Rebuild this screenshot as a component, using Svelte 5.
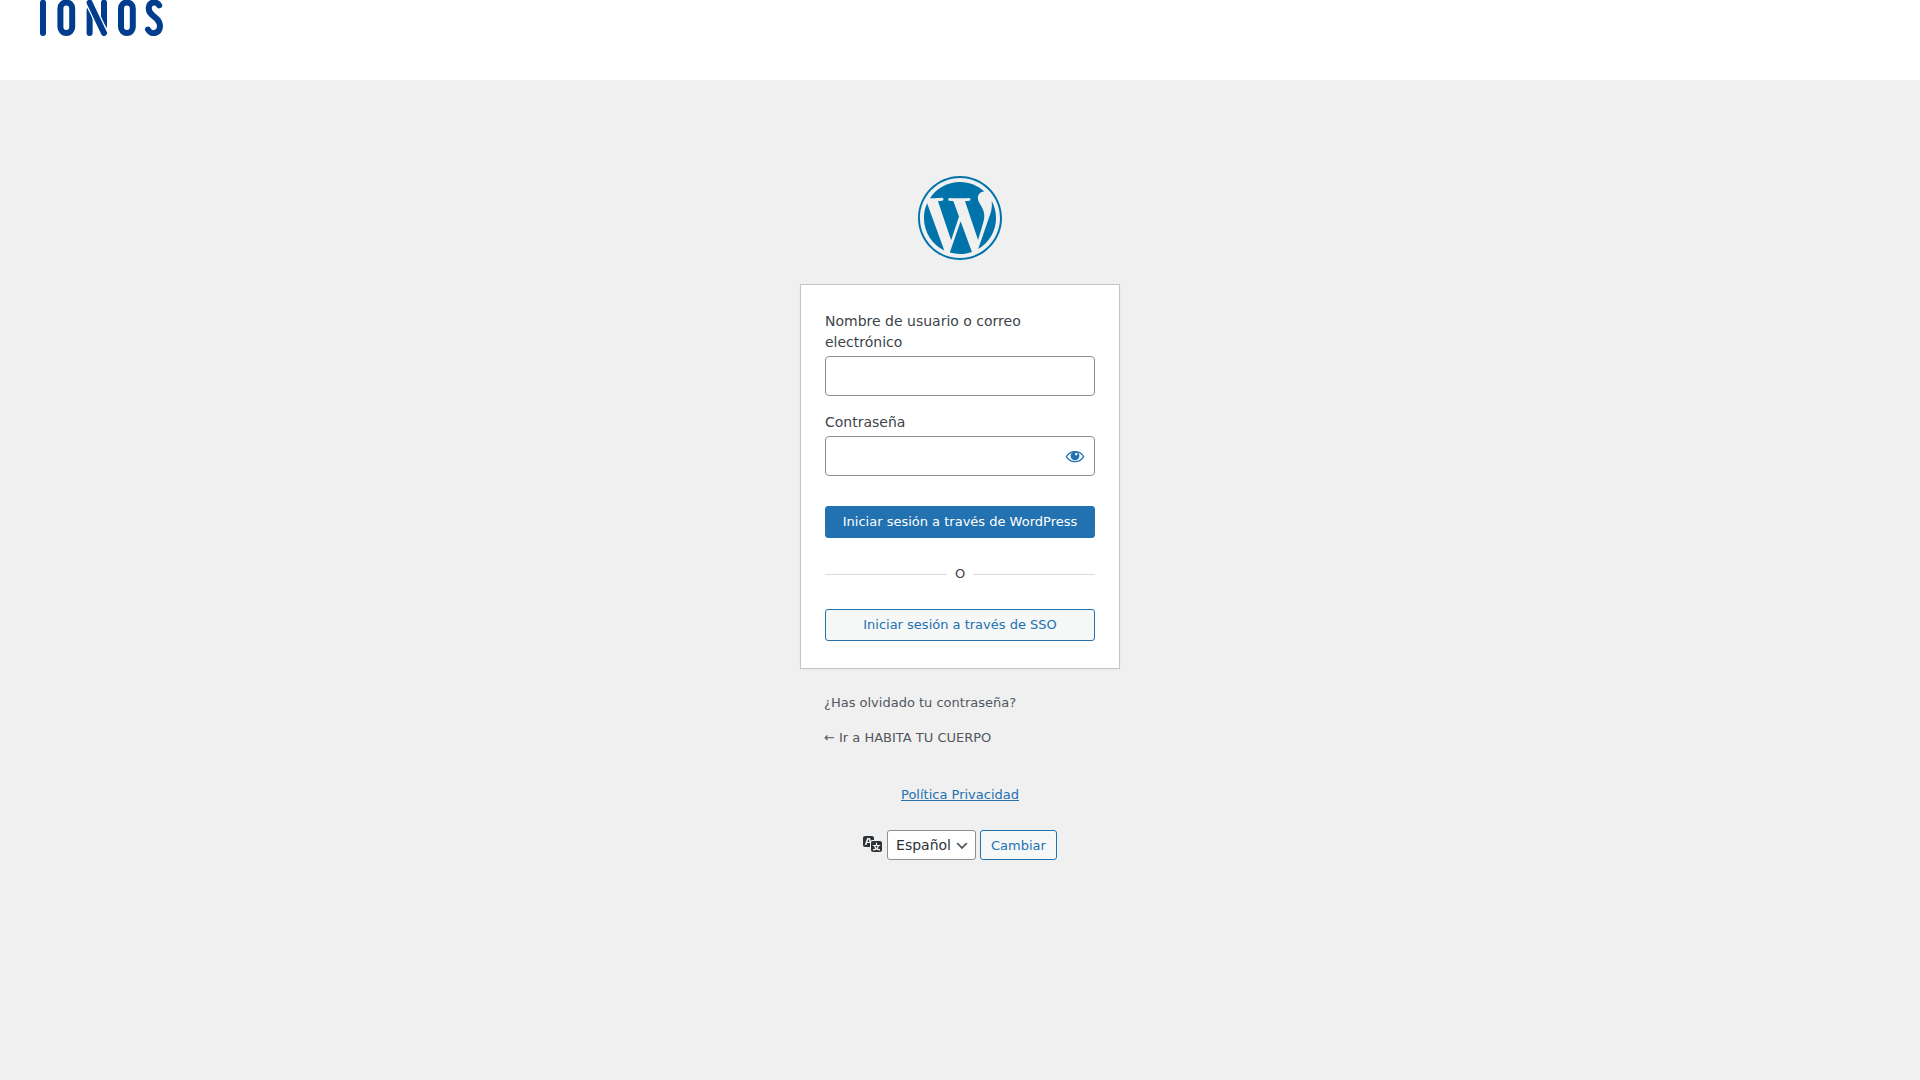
<script>
  let user = $state('');
  let password = $state('');
  let visible = $state(false);
</script>

<header>
  <svg class="brand" viewBox="0 0 124 36" role="img" aria-label="IONOS">
    <g fill="none" stroke="#003d8f" stroke-width="6" stroke-linecap="round">
      <path d="M3 2.7V33" />
      <path d="M20.4 8.4a5.9 5.9 0 0 1 11.8 0V27.1a5.9 5.9 0 0 1-11.8 0Z" />
      <path d="M49.6 10V33M64 2.7V26" />
      <path d="M49.6 2.5L64 33" stroke="#fff" stroke-width="8.6" stroke-linecap="butt" />
      <path d="M49.6 14V33M64 2.7V22" stroke-width="5" />
      <path d="M49.6 2.5L64 33" stroke="#fff" stroke-width="8.6" stroke-linecap="butt" />
      <path d="M49.6 2.7L64 33" />
      <path d="M81 8.4a5.9 5.9 0 0 1 11.8 0V27.1a5.9 5.9 0 0 1-11.8 0Z" />
      <path d="M119.2 5.4C117.3 1.7 110 .8 108.8 7.2C107.6 16.5 120.4 16.5 120 26.3C119.5 34.2 110.7 35.2 108 29.5" />
    </g>
  </svg>
</header>

<main>
  <h1>
    <a href="#wordpress" aria-label="WordPress">
      <svg class="logo" viewBox="0 0 64 64" aria-hidden="true"><path fill="#0073aa" d="M4.548 31.999c0 10.9 6.3 20.3 15.5 24.706L6.925 20.827C5.402 24.2 4.5 28 4.5 31.999z M50.531 30.614c0-3.394-1.219-5.742-2.264-7.57c-1.391-2.263-2.695-4.177-2.695-6.439c0-2.523 1.912-4.872 4.609-4.872 c0.121 0 0.2 0 0.4 0.022C45.653 7.3 39.1 4.5 32 4.548c-9.591 0-18.027 4.921-22.936 12.4 c0.645 0 1.3 0 1.8 0.033c2.871 0 7.316-0.349 7.316-0.349c1.479-0.086 1.7 2.1 0.2 2.3 c0 0-1.487 0.174-3.142 0.261l9.997 29.735l6.008-18.017l-4.276-11.718c-1.479-0.087-2.879-0.261-2.879-0.261 c-1.48-0.087-1.306-2.349 0.174-2.262c0 0 4.5 0.3 7.2 0.349c2.87 0 7.317-0.349 7.317-0.349 c1.479-0.086 1.7 2.1 0.2 2.262c0 0-1.489 0.174-3.142 0.261l9.92 29.508l2.739-9.148 C49.628 35.7 50.5 33 50.5 30.614z M32.481 34.4l-8.237 23.934c2.46 0.7 5.1 1.1 7.8 1.1 c3.197 0 6.262-0.552 9.116-1.556c-0.072-0.118-0.141-0.243-0.196-0.379L32.481 34.4z M56.088 18.8 c0.119 0.9 0.2 1.8 0.2 2.823c0 2.785-0.521 5.916-2.088 9.832l-8.385 24.242c8.161-4.758 13.65-13.6 13.65-23.728 C59.451 27.2 58.2 22.7 56.1 18.83z M32 0c-17.645 0-32 14.355-32 32C0 49.6 14.4 64 32 64s32-14.355 32-32.001 C64 14.4 49.6 0 32 0z M32 62.533c-16.835 0-30.533-13.698-30.533-30.534C1.467 15.2 15.2 1.5 32 1.5 s30.534 13.7 30.5 30.532C62.533 48.8 48.8 62.5 32 62.533z" /></svg>
    </a>
  </h1>

  <form class="card" onsubmit={(e) => e.preventDefault()}>
    <div class="field">
      <label for="user">Nombre de usuario o correo electrónico</label>
      <input id="user" type="text" bind:value={user} autocomplete="username" />
    </div>
    <div class="field">
      <label for="pass">Contraseña</label>
      <div class="secret">
        <input id="pass" type={visible ? 'text' : 'password'} bind:value={password} autocomplete="current-password" />
        <button type="button" class="eye" aria-label="Mostrar la contraseña" onclick={() => (visible = !visible)}>
          <svg viewBox="0 0 20 20" aria-hidden="true">
            <path fill="none" stroke="currentColor" stroke-width="1.2" d="M1.4 10.6C3.3 7.2 6.5 5.6 10 5.6s6.7 1.6 8.6 5c-1.9 3.4-5.1 5-8.6 5s-6.7-1.6-8.6-5z" />
            <path fill="currentColor" fill-rule="evenodd" d="M10 5.4a4.4 4.4 0 1 1 0 8.8A4.4 4.4 0 0 1 10 5.4zM10.2 7v2.2h2V7z" />
          </svg>
        </button>
      </div>
    </div>
    <button type="submit" class="button primary wide">Iniciar sesión a través de WordPress</button>
    <div class="divider"><span>O</span></div>
    <button type="button" class="button wide">Iniciar sesión a través de SSO</button>
  </form>

  <nav>
    <a href="#recuperar">¿Has olvidado tu contraseña?</a>
    <a href="#inicio">← Ir a HABITA TU CUERPO</a>
  </nav>

  <a class="privacy" href="#privacidad">Política Privacidad</a>

  <form class="language" onsubmit={(e) => e.preventDefault()}>
    <label for="locale" aria-label="Idioma">
      <svg viewBox="0 0 20 20" aria-hidden="true"><path fill="currentColor" d="M11 7H9.49c-.63 0-1.25.3-1.59.7L7 5H4.13l-2.39 7h1.69l.74-2H7v4H2c-1.1 0-2-.9-2-2V5c0-1.1.9-2 2-2h7c1.1 0 2 .9 2 2v2zM6.51 9H4.49l1-2.93zM10 8h7c1.1 0 2 .9 2 2v7c0 1.1-.9 2-2 2h-7c-1.1 0-2-.9-2-2v-7c0-1.1.9-2 2-2zm7.25 5v-1.08h-3.17V9.75h-1.16v2.17H9.75V13h1.28c.11.85.56 1.85 1.28 2.62-.87.36-1.89.62-2.31.62-.01.02.22.97.2 1.46.84 0 2.21-.5 3.28-1.15 1.09.65 2.48 1.15 3.34 1.15-.02-.49.2-1.44.2-1.46-.43 0-1.49-.27-2.38-.63.7-.77 1.14-1.77 1.25-2.61h1.36zm-3.81 1.93c-.5-.46-.85-1.13-1.01-1.93h2.09c-.17.8-.51 1.47-1 1.93l-.04.03s-.03-.02-.04-.03z" /></svg>
    </label>
    <select id="locale">
      <option>Español</option>
    </select>
    <button type="submit" class="button">Cambiar</button>
  </form>
</main>

<style>
  :global(body) {
    margin: 0;
    background: #f0f0f0;
    color: #3c434a;
    font: 13px/18px "DejaVu Sans", sans-serif;
  }

  * {
    box-sizing: border-box;
  }

  input,
  button,
  select {
    font-family: inherit;
  }

  svg {
    display: block;
  }

  header {
    height: 80px;
    padding: 0 40px;
    background: #fff;
  }

  .brand {
    width: 124px;
    height: 36px;
  }

  main {
    display: flex;
    flex-direction: column;
    align-items: center;
    width: 100%;
    max-width: 320px;
    margin: 0 auto;
    padding: 96px 0 24px;
  }

  h1 {
    margin: 0 0 24px;
  }

  .logo {
    width: 84px;
    height: 84px;
  }

  .card {
    width: 100%;
    padding: 26px 24px 27px;
    border: 1px solid #c3c4c7;
    background: #fff;
    box-shadow: 0 1px 3px rgba(0, 0, 0, 0.04);
  }

  .field {
    margin-bottom: 16px;
  }

  .field label {
    display: block;
    margin-bottom: 3px;
    font-size: 14px;
    line-height: 21px;
  }

  .field input {
    display: block;
    width: 100%;
    height: 40px;
    padding: 3px 5px;
    border: 1px solid #8c8f94;
    border-radius: 4px;
    background: #fff;
    color: #2c3338;
    font-size: 24px;
  }

  .secret {
    position: relative;
  }

  .field .secret input {
    padding-right: 40px;
  }

  .eye {
    position: absolute;
    top: 0;
    right: 0;
    display: grid;
    place-items: center;
    width: 40px;
    height: 40px;
    padding: 0;
    border: 0;
    background: none;
    color: #2271b1;
    cursor: pointer;
  }

  .eye svg {
    width: 20px;
    height: 20px;
  }

  .button {
    height: 30px;
    padding: 0 10px;
    border: 1px solid #2271b1;
    border-radius: 3px;
    background: #f6f7f7;
    color: #2271b1;
    font-size: 13px;
    cursor: pointer;
  }

  .button.wide {
    display: block;
    width: 100%;
    height: 32px;
    padding-bottom: 2px;
  }

  .button.primary {
    margin-top: 30px;
    background: #2271b1;
    color: #fff;
  }

  .divider {
    display: flex;
    align-items: center;
    gap: 8px;
    margin: 27px 0 26px;
  }

  .divider::before,
  .divider::after {
    content: "";
    flex: 1;
    height: 1px;
    background: #dcdcde;
  }

  nav {
    display: flex;
    flex-direction: column;
    align-items: flex-start;
    gap: 17px;
    width: 100%;
    margin-top: 25px;
    padding: 0 24px;
  }

  nav a {
    color: #50575e;
    text-decoration: none;
  }

  .privacy {
    margin-top: 39px;
    color: #2271b1;
  }

  .language {
    display: flex;
    align-items: center;
    gap: 4px;
    margin-top: 26px;
  }

  .language label {
    padding-bottom: 4px;
  }

  .language svg {
    width: 20px;
    height: 20px;
    color: #2c3338;
  }

  select {
    height: 30px;
    padding: 0 24px 0 8px;
    border: 1px solid #8c8f94;
    border-radius: 3px;
    appearance: none;
    background: #fff url("data:image/svg+xml,%3Csvg xmlns='http://www.w3.org/2000/svg' viewBox='0 0 20 20'%3E%3Cpath d='M5 6l5 5 5-5 2 1-7 7-7-7 2-1z' fill='%23555'/%3E%3C/svg%3E") no-repeat right 5px top 55% / 16px 16px;
    color: #2c3338;
    font-size: 14px;
  }
</style>
